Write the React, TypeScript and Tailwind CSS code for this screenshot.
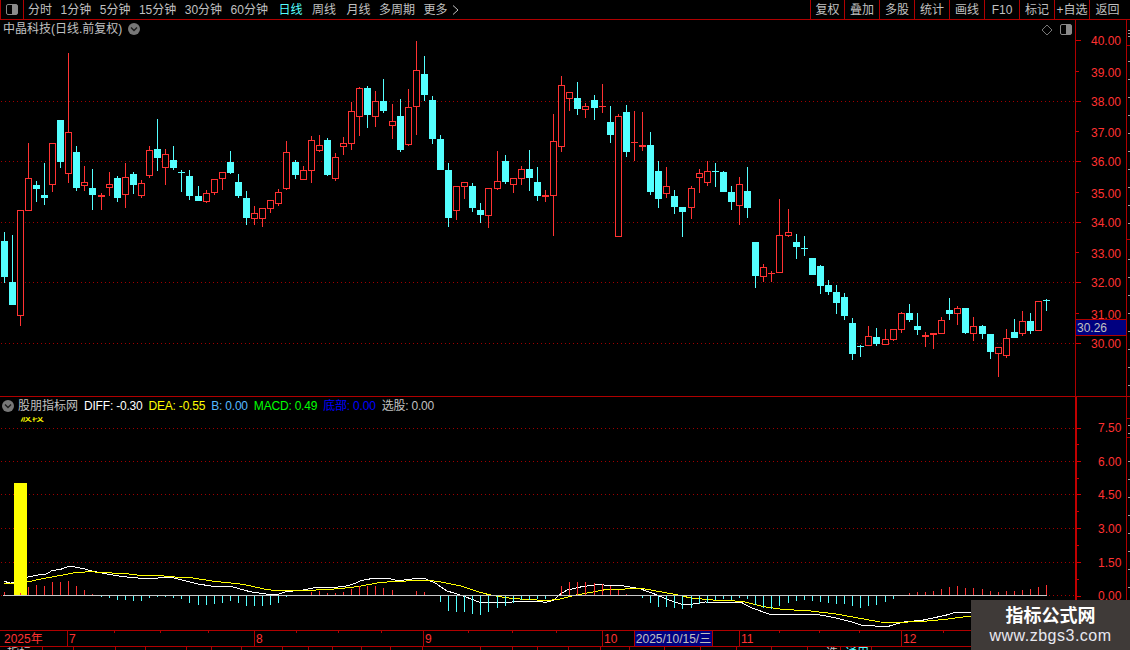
type Candle = [string, number, number, number, number];

// kind, high, body top, body bottom, low (read from 3x crops, offset added below)
const seg1: Candle[] = [
  ["c",576,603,711,728],["c",585,726,795,795],["r",511,511,827,857],["r",309,415,512,512],["c",423,435,447,486],
  ["c",369,465,474,495],["r",310,310,434,456],["c",240,240,366,384],["r",39,277,401,429],["c",318,336,444,453],
  ["r",378,427,437,453],["c",387,444,465,510],["r",459,465,470,510],["r",396,433,443,468],["c",408,414,474,486],
  ["r",369,412,464,504],["c",396,402,435,462],["r",420,430,468,474],["r",318,331,407,414],["c",237,327,354,393],
  ["r",327,343,383,435],["c",318,360,384,390],["c",390,396,398,456],["c",390,408,468,480],["c",438,468,483,483],
  ["r",450,460,486,489],["r",418,418,458,465],["r",397,397,416,450],["c",333,366,399,402],["c",402,426,468,474],
  ["c",453,474,534,555],["r",498,520,537,555],["r",505,505,537,561],["r",481,481,506,519],["r",447,457,491,498],
  ["r",303,337,446,450],["c",360,366,405,417],["r",378,391,419,419],["r",288,301,392,429],["r",285,316,332,336],
  ["c",294,300,405,408],["r",339,352,416,423],["r",291,310,320,345],["r",186,214,311,330],["r",141,145,230,288],
  ["c",138,144,225,264],["r",153,184,230,261],["c",117,183,213,219],["r",192,244,257,297],["c",177,228,330,336],
  ["r",147,202,314,318],["r",3,91,200,285],["c",48,102,165,183],["c",168,180,297,312],["c",285,297,390,390],
  ["c",369,390,534,561],["r",439,439,512,540],["r",427,427,440,477],["c",429,438,504,516],["c",489,510,525,549],
  ["r",445,445,527,564],["r",333,424,446,450],["c",345,363,426,432],["r",415,415,434,459],["r",378,388,416,435],
  ["c",330,387,414,453],["c",381,426,468,483],["r",450,465,470,486],["r",222,304,467,588],
];
const seg2: Candle[] = [
  ["r",18,46,230,246],["r",67,67,86,123],["c",36,84,117,135],["r",99,109,119,144],["c",75,90,114,150],
  ["r",42,108,110,129],["c",108,156,195,219],["r",132,139,500,500],["c",105,126,246,261],["r",123,217,220,273],
  ["r",126,226,231,243],["c",186,225,366,375],["c",273,303,387,414],["r",291,349,371,384],["c",360,378,411,432],
  ["c",411,411,426,501],["r",348,355,413,447],["r",297,310,323,369],["r",273,304,338,348],["c",279,303,305,351],
  ["c",303,306,366,366],["c",348,366,396,420],["r",321,343,407,465],["c",291,363,414,444],["c",516,516,618,654],
  ["r",582,592,620,636],["r",603,610,613,636],["r",387,496,608,608],["r",417,487,497,501],["c",492,516,531,567],
];
const seg3: Candle[] = [
  ["c",48,85,87,108],["c",114,114,165,165],["c",135,138,198,222],["c",180,195,216,225],["c",195,216,249,282],
  ["c",219,231,288,300],["c",294,309,402,420],["c",375,379,381,411],["r",318,349,377,377],["c",324,351,372,378],
  ["r",327,358,374,374],["r",327,328,359,363],["r",276,280,329,339],["c",252,279,300,306],["c",279,318,330,345],
  ["r",336,345,350,381],["r",339,340,346,387],["r",291,301,341,341],["c",234,270,282,300],["r",258,265,281,315],
  ["c",264,264,339,342],["r",291,319,341,363],["c",315,318,342,357],["c",342,342,396,417],["r",382,382,401,471],
  ["r",327,355,407,414],["c",297,336,354,354],["r",273,304,341,348],["c",279,303,333,342],["r",244,244,332,332],
  ["c",237,241,243,273],
];

const toReal = (list: Candle[], off: number): Candle[] =>
  list.map(([k, h, t, b, l]) => [k, Math.round(off + h / 3), Math.round(off + t / 3), Math.round(off + b / 3), Math.round(off + l / 3)]);

const candles = [...toReal(seg1, 40), ...toReal(seg2, 70), ...toReal(seg3, 220)];

const RED = "#ff3232";
const CYAN = "#54ffff";
const candleX = (i: number) => 4 + 8 * i + Math.floor((i + 0.3) / 12.07);

// macd histogram tops, keyed by candle index
const bars: [number, number][] = [
  [0,127],[1,139],[2,129],[3,111],[4,105],[5,108],[6,96],[7,96],[8,93],[9,108],[10,120],[11,132],[12,141],[13,144],[14,150],
  [15,150],[16,153],[17,153],[18,144],[19,141],[20,141],[21,144],[22,147],[23,159],[24,165],[25,165],[26,162],[27,159],
  [28,153],[29,159],[30,168],[31,168],[32,168],[33,165],[34,159],[35,141],[38,126],[39,123],[40,129],[41,129],[42,126],
  [43,118],[44,108],[45,108],[46,108],[47,114],[48,120],[51,123],[52,126],[54,156],[55,183],[56,186],[57,186],[58,192],
  [59,195],[60,186],[61,174],[62,168],[63,159],[64,150],[65,150],[66,147],[67,147],[69,108],[70,96],[71,96],[72,96],
  [73,100],[74,102],[75,108],[76,120],[77,132],[79,144],[80,159],[81,171],[82,171],[83,174],[84,178],[85,174],[86,162],
  [87,159],[88,150],[89,147],[90,150],[91,144],[92,147],[93,165],[94,174],[95,177],[96,168],[97,159],[98,153],[99,150],
  [100,153],[101,156],[102,159],[103,162],[104,162],[105,168],[106,174],[107,168],[108,165],[109,156],[110,147],[112,129],
  [113,126],[114,126],[115,123],[116,117],[117,111],[118,108],[119,114],[120,114],[121,117],[122,123],[123,126],[124,123],
  [125,123],[126,120],[127,117],[128,111],[129,105],
];

type Pt = [number, number];
const left = (pts: Pt[]) => pts.map(([x, y]) => `${(x / 2.8).toFixed(1)},${(550 + y / 3).toFixed(1)}`);
const right = (pts: Pt[]) => pts.map(([x, y]) => `${(560 + x / 2.75).toFixed(1)},${(550 + y / 3).toFixed(1)}`);

const whiteLine = [
  ...left([[12,94],[30,100],[76,82],[100,76],[130,72],[145,62],[170,58],[190,50],[205,50],[235,56],[260,64],[300,72],[345,80],[385,84],[405,86],[480,82],[510,90],[555,102],[590,108],[650,110],[700,125],[750,133],[780,133],[800,125],[850,120],[880,113],[930,113],[970,108],[1000,98],[1010,92],[1045,85],[1085,85],[1115,92],[1160,86],[1190,86],[1220,100],[1250,122],[1285,134],[1320,147],[1345,158],[1420,158],[1450,154],[1495,154],[1530,157],[1550,150]]),
  ...right([[0,133],[20,120],[60,110],[100,104],[170,107],[220,116],[260,132],[300,150],[335,163],[360,163],[400,156],[500,158],[530,175],[575,192],[700,192],[750,202],[800,215],[830,226],[900,230],[940,217],[1000,210],[1060,196],[1090,186],[1130,186],[1200,180],[1300,170]]),
].join(" ");

const yellowLine = [
  ...left([[12,101],[40,102],[80,95],[110,88],[150,80],[190,72],[210,68],[250,65],[300,68],[360,72],[390,76],[450,77],[500,82],[540,84],[600,94],[680,103],[740,117],[770,122],[870,121],[950,116],[1000,110],[1060,98],[1110,94],[1200,91],[1230,95],[1290,108],[1340,126],[1370,134],[1400,140],[1440,146],[1490,149],[1530,152]]),
  ...right([[0,147],[40,136],[80,128],[130,118],[230,116],[280,126],[320,134],[360,144],[420,150],[500,154],[560,170],[610,178],[690,183],[760,192],[820,204],[880,216],[940,217],[1000,214],[1060,208],[1130,198],[1300,185]]),
].join(" ");

const priceAxis: [string, number, boolean][] = [
  ["40.00",40,true],["39.00",71,false],["38.00",101,true],["37.00",131,false],["36.00",161,true],
  ["35.00",192,false],["34.00",222,true],["33.00",252,false],["32.00",282,true],["31.00",313,false],["30.00",343,true],
];
// label, tick y, text baseline
const macdAxis: [string, number, number][] = [["7.50",428,432],["6.00",461,466],["4.50",494,499],["3.00",528,533],["1.50",562,567],["0.00",596,600]];
const priceGrid = [101, 161, 222, 282, 343];
const macdGrid = [428, 461, 494, 528, 562, 595];

const dateTicks = [114, 160, 208, 296, 338, 381, 468, 512, 556, 779, 819, 859, 943, 985, 1027, 1069, 1110];
const monthMarks: [string, number][] = [["7",67],["8",254],["9",423],["10",602],["11",739],["12",901]];
const tabMarks = [42,73,115,145,186,211,241,282,308,332,361,390,422,480,512,537,568,600,629,664,700,736,771,807,840,871];

function ChevronDot() {
  return (
    <svg width="12" height="12" viewBox="0 0 12 12" className="shrink-0">
      <circle cx="6" cy="6" r="6" fill="#777777" />
      <path d="M3 4.5 L6 7.5 L9 4.5" fill="none" stroke="#1c1c1c" strokeWidth="1.4" />
    </svg>
  );
}

function PanelIcon() {
  return (
    <div className="w-[12px] h-[11px] rounded-[2px] border border-[#8a8a8a] flex justify-end">
      <div className="w-[5px] h-full bg-[#8a8a8a]" />
    </div>
  );
}

function Dotted({ y }: { y: number }) {
  return <line x1="1" x2="1075" y1={y + 0.5} y2={y + 0.5} stroke="#a00000" strokeDasharray="1 3" shapeRendering="crispEdges" />;
}

function PriceChart() {
  return (
    <svg width="1075" height="376" viewBox="0 20 1075 376" className="block">
      {priceGrid.map((y) => <Dotted key={y} y={y} />)}
      {candles.map(([k, h, t, b, l], i) => {
        const x = candleX(i);
        const c = k === "r" ? RED : CYAN;
        return (
          <g key={i} shapeRendering="crispEdges">
            <rect x={x} y={h} width="1" height={Math.max(l - h, 1)} fill={c} />
            {k === "c" || b - t <= 2 ? (
              <rect x={x - 3} y={t} width="7" height={Math.max(b - t, 1)} fill={c} />
            ) : (
              <rect x={x - 2.5} y={t + 0.5} width="6" height={b - t - 1} fill="#000" stroke={c} />
            )}
          </g>
        );
      })}
    </svg>
  );
}

function MacdChart() {
  return (
    <svg width="1075" height="233" viewBox="0 397 1075 233" className="block">
      {macdGrid.map((y) => <Dotted key={y} y={y} />)}
      <polyline points={whiteLine} fill="none" stroke="#ffffff" strokeWidth="1" shapeRendering="crispEdges" />
      <polyline points={yellowLine} fill="none" stroke="#ffff00" strokeWidth="1" shapeRendering="crispEdges" />
      <rect x="14" y="483" width="13" height="112" fill="#ffff00" />
      {bars.map(([i, t]) => {
        const top = Math.round(550 + t / 3);
        const up = top < 595;
        return (
          <rect key={i} x={candleX(i)} y={up ? top : 595} width="1" height={Math.max(Math.abs(595 - top), 1)} fill={up ? RED : CYAN} shapeRendering="crispEdges" />
        );
      })}
      <rect x="3" y="595" width="1044" height="1" fill="#c8c8c8" shapeRendering="crispEdges" />
    </svg>
  );
}

const periods = ["1分钟", "5分钟", "15分钟", "30分钟", "60分钟"];
const tools = ["复权", "叠加", "多股", "统计", "画线", "F10", "标记", "+自选"];

export default function App() {
  return (
    <div className="relative w-[1130px] h-[650px] overflow-hidden bg-black flex flex-col text-[12px] leading-none text-[#c0c0c0] font-['Liberation_Sans','Noto_Sans_CJK_SC',sans-serif]">
      {/* top toolbar */}
      <div className="h-[20px] shrink-0 flex items-center border-b border-[#b00000]">
        <div className="w-[24px] h-full border-x border-[#b00000] flex items-center justify-center">
          <PanelIcon />
        </div>
        <div className="flex items-center ml-[4px] gap-[8.5px]">
          <span>分时</span>
          {periods.map((p) => <span key={p}>{p}</span>)}
          <span className="text-[#54ffff] ml-[2px]">日线</span>
          <span className="ml-[1px]">周线</span>
          <span className="ml-[2px]">月线</span>
          <span>多周期</span>
          <span className="flex items-center gap-[4px]">
            更多
            <svg width="7" height="10" viewBox="0 0 7 10"><path d="M1 0.5 L6 5 L1 9.5" fill="none" stroke="#c0c0c0" /></svg>
          </span>
        </div>
        <div className="ml-auto flex h-full items-stretch">
          <div className="w-[34px] border-l border-[#b00000] flex items-center justify-center">{tools[0]}</div>
          {tools.slice(1).map((t) => (
            <div key={t} className="w-[35px] border-l border-[#b00000] flex items-center justify-center whitespace-nowrap">{t}</div>
          ))}
          <div className="w-[41px] pr-[5px] border-l border-[#b00000] flex items-center justify-center">返回</div>
        </div>
      </div>

      {/* price panel */}
      <div className="relative h-[377px] shrink-0 flex border-b border-[#b00000]">
        <div className="relative w-[1075px] shrink-0">
          <PriceChart />
          <div className="absolute left-[3px] top-[3px] flex items-center gap-[6px] h-[12px] whitespace-nowrap">
            <span>中晶科技(日线.前复权)</span>
            <ChevronDot />
          </div>
          <svg width="12" height="12" viewBox="0 0 12 12" className="absolute left-[1041px] top-[4px]">
            <path d="M6 1 L11 6 L6 11 L1 6 Z" fill="none" stroke="#777777" />
          </svg>
          <div className="absolute left-[1060px] top-[4px]"><PanelIcon /></div>
        </div>
        <div className="relative w-[52px] shrink-0 border-x border-[#b00000]">
          <svg width="50" height="376" viewBox="1076 20 50 376" className="block">
            {priceAxis.map(([label, y, major]) => (
              <g key={label}>
                <rect x="1076" y={y} width={major ? 5 : 3} height="1" fill="#d00000" />
                <text x="1091" y={y + (major ? 5 : 6)} fill={RED} fontSize="12">{label}</text>
              </g>
            ))}
          </svg>
          <div className="absolute left-0 top-[299px] w-[50px] h-[17px] bg-[#000080] border-y border-[#b00000] pl-[1px] flex items-center">30.26</div>
        </div>
        <svg width="3" height="376" viewBox="1127 20 3 376" className="block">
          {[30, 33, 36, 61, 79, 97, 115, 133, 151, 169, 187, 205, 223, 259, 277, 295, 313, 331, 349, 367, 385].map((y) => (
            <rect key={y} x="1128" y={y} width="2" height="1" fill="#a0a0a0" />
          ))}
          <rect x="1127" y="45" width="3" height="1" fill="#b00000" />
          <rect x="1127" y="239" width="3" height="1" fill="#b00000" />
        </svg>
      </div>

      {/* indicator panel */}
      <div className="relative h-[234px] shrink-0 flex border-b border-[#b00000]">
        <div className="relative w-[1075px] shrink-0">
          <MacdChart />
          <div className="absolute left-[2px] top-[3px] flex items-center h-[12px] whitespace-nowrap">
            <ChevronDot />
            <span className="ml-[4px]">股朋指标网</span>
            <span className="ml-[6px] text-white tracking-[-0.2px]">DIFF: -0.30</span>
            <span className="ml-[6px] text-[#ffff00] tracking-[-0.2px]">DEA: -0.55</span>
            <span className="ml-[6px] text-[#55b9ff] tracking-[-0.2px]">B: 0.00</span>
            <span className="ml-[6px] text-[#00ff00] tracking-[-0.2px]">MACD: 0.49</span>
            <span className="ml-[6px] text-[#0000ff] tracking-[-0.2px]">底部: 0.00</span>
            <span className="ml-[6px] tracking-[-0.2px]">选股: 0.00</span>
          </div>
          <div className="absolute left-[20px] top-[20px] h-[6px] w-[26px] overflow-hidden">
            <div className="-mt-[6px] text-[#ffff00] whitespace-nowrap">波段</div>
          </div>
        </div>
        <div className="w-[52px] shrink-0 border-x-2 border-[#c00000] border-r border-r-[#b00000]">
          <svg width="49" height="233" viewBox="1077 397 49 233" className="block">
            {macdAxis.map(([label, y, base]) => (
              <g key={label}>
                <rect x="1077" y={y} width="4" height="1" fill="#d00000" />
                <text x="1098" y={base} fill={RED} fontSize="12">{label}</text>
              </g>
            ))}
            {[444, 478, 511, 545, 579, 613].map((y) => <rect key={y} x="1077" y={y} width="2" height="1" fill="#d00000" />)}
          </svg>
        </div>
        <svg width="3" height="233" viewBox="1127 397 3 233" className="block">
          {[425, 433, 461, 479, 497, 515, 533, 551, 569, 587, 605, 623].map((y) => (
            <rect key={y} x="1128" y={y} width="2" height="1" fill="#a0a0a0" />
          ))}
          <rect x="1127" y="418" width="3" height="1" fill="#b00000" />
          <rect x="1127" y="437" width="3" height="1" fill="#b00000" />
        </svg>
      </div>

      {/* date axis */}
      <div className="relative h-[16px] shrink-0 border-b border-[#b00000]">
        <svg width="1130" height="15" viewBox="0 631 1130 15" className="block">
          {dateTicks.map((x) => <rect key={x} x={x} y="631" width="1" height="2" fill="#b00000" />)}
          {monthMarks.map(([label, x]) => (
            <g key={label}>
              <rect x={x} y="631" width="1" height="15" fill="#b00000" />
              <text x={x + 2} y="643" fill={RED} fontSize="12">{label}</text>
            </g>
          ))}
          <text x="4" y="643" fill={RED} fontSize="12">2025年</text>
        </svg>
        <div className="absolute left-[634px] top-0 w-[79px] h-[15px] bg-[#000080] border-x border-[#b00000] flex items-center justify-center whitespace-nowrap">2025/10/15/三</div>
      </div>

      {/* sheet tabs, cut off by the window */}
      <svg width="1130" height="3" viewBox="0 647 1130 3" className="block">
        {tabMarks.map((x) => <rect key={x} x={x} y="647" width="1" height="3" fill="#b00000" />)}
        <text x="7" y="657" fill="#c0c0c0" fontSize="12">指标</text>
        <text x="826" y="657" fill="#c0c0c0" fontSize="12">选</text>
        <text x="845" y="657" fill="#54ffff" fontSize="12">通用</text>
      </svg>

      {/* watermark */}
      <div className="absolute right-0 bottom-0 w-[159px] h-[50px] bg-[#3f3a38] flex flex-col items-center pt-[5px]">
        <div className="text-[18px] leading-[18px] font-bold text-white font-['Noto_Sans_CJK_SC',sans-serif]">指标公式网</div>
        <div className="mt-[4px] text-[16px] leading-[18px] tracking-[0.5px] text-[#e8e8f0]">www.zbgs3.com</div>
      </div>
    </div>
  );
}
